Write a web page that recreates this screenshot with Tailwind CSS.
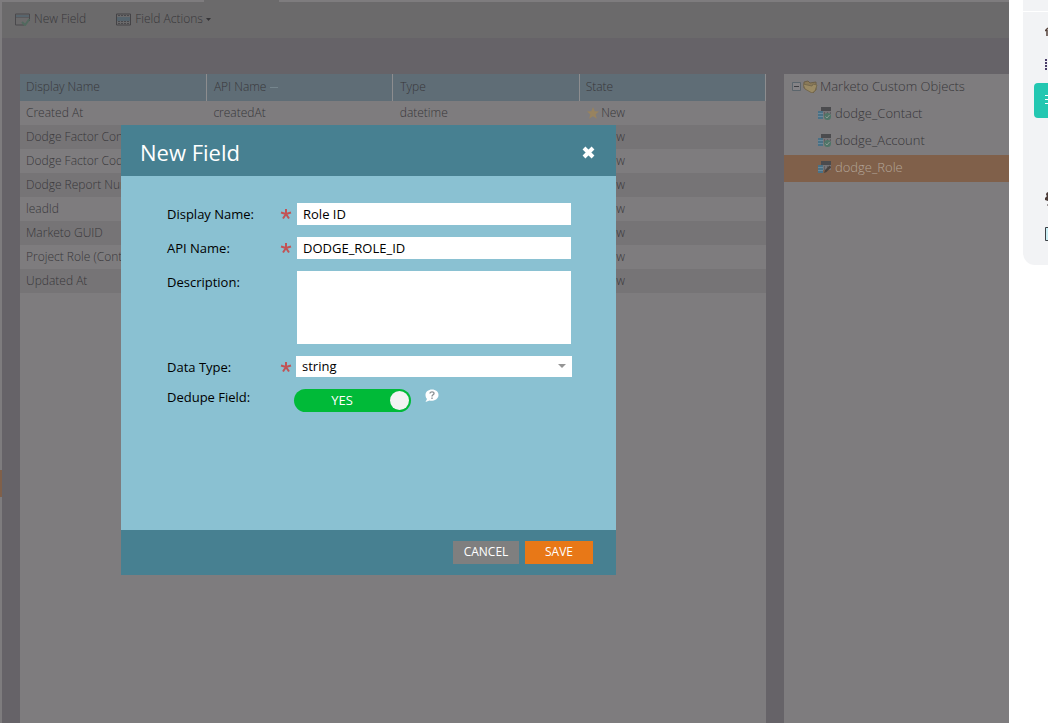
<!DOCTYPE html>
<html lang="en">
<head>
<meta charset="utf-8">
<title>Marketo Custom Objects</title>
<script src="https://cdn.jsdelivr.net/npm/@tailwindcss/browser@4"></script>
</head>
<body class="flex h-screen overflow-hidden bg-white font-['Open_Sans',sans-serif] text-[13px] text-[#38373a]">
<svg class="hidden">
  <symbol id="object" viewBox="0 0 13 13"><path d="M3 0h10v9H3z" fill="#777578"/><path d="M3 0h10v4H3z" fill="#4b4b4e"/><path d="M6 6h1M9 6h1M6 8h1M9 8h1M12 6h1" stroke="#4b4b4e"/><path d="M0 4h5v8H0z" fill="#4a7186"/><path d="M0 6.500h5M0 9.500h5" stroke="#6a899a"/></symbol>
  <symbol id="star" viewBox="0 0 12 12"><path d="M6 0l1.700 4.200 4.300.3-3.300 2.800 1.100 4.500L6 9.300l-3.800 2.500 1.100-4.500L0 4.500l4.300-.3z" fill="#98835f"/></symbol>
</svg>

<main class="relative flex min-w-0 flex-1 bg-[#7e7c7e]">
  <div class="flex w-[2px] shrink-0 flex-col"><div class="mt-[470px] h-[27px] bg-[#80604a]"></div></div>
  <div class="flex min-w-0 flex-1 flex-col bg-[#666368]">
    <div class="flex h-[2px] shrink-0 bg-[#7e7c7e]"><div class="ml-[202px] w-[75px] bg-[#6b6a6b]"></div></div>
    <nav class="flex h-9 shrink-0 items-center gap-[30px] bg-[#6b6a6b] px-[13px] pb-[2px] text-xs font-light">
      <button class="flex items-center gap-1">
        <svg class="h-[13px] w-[15px]" viewBox="0 0 15 13" fill="none"><path d="M.5 1h14v7M.5 1v11H9" stroke="#4a494c"/><path d="M1 2h13v2H1z" fill="#58656d"/><path d="M1 4.500h13" stroke="#444346" stroke-opacity=".4"/><path d="M7 9l3 3 4.500-6" stroke="#51695e" stroke-width="2"/></svg>
        New Field
      </button>
      <button class="flex items-center gap-1">
        <svg class="h-[13px] w-[15px]" viewBox="0 0 15 13" fill="none"><path d="M.5 1h14v11H.5z" stroke="#444346"/><path d="M1 4h13v4H1z" fill="#55636c"/><path d="M2 2.500h12M2 8.500h12M2 10.500h12" stroke="#4a494c" stroke-dasharray="2 1"/></svg>
        <span>Field Actions</span>
        <svg class="-ml-px h-[3px] w-[5px]" viewBox="0 0 5 3"><path d="M0 0h5L2.500 3z" fill="#353437"/></svg>
      </button>
    </nav>
    <div class="flex min-h-0 flex-1 gap-[18px] pl-[18px] pt-9">
      <section class="min-w-0 flex-1 bg-[#7e7c7e]">
        <table class="w-full table-fixed border-collapse text-left text-xs font-light">
          <thead class="bg-[#5f6d76]">
            <tr class="h-[27px]">
              <th class="border-r border-[#8d8d8f] pb-[2px] pl-[6px] font-light">Display Name</th>
              <th class="border-r border-[#8d8d8f] pb-[2px] pl-[7px] font-light">API Name <span class="inline-block h-px w-2 bg-[#75858d] align-middle"></span></th>
              <th class="border-r border-[#8d8d8f] pb-[2px] pl-[7px] font-light">Type</th>
              <th class="border-r border-[#8d8d8f] pb-[2px] pl-[6px] font-light">State</th>
            </tr>
          </thead>
          <tbody class="[&_td]:truncate [&_td]:pl-[7px] [&_td:first-child]:pl-[6px] [&_td:last-child]:pl-[6px]">
            <tr class="h-6"><td>Created At</td><td>createdAt</td><td>datetime</td><td><span class="flex items-center gap-[2px]"><svg class="ml-[2px] h-3 w-3"><use href="#star"/></svg>New</span></td></tr>
            <tr class="h-6 bg-[#767476]"><td>Dodge Factor Contact</td><td></td><td></td><td><span class="flex items-center gap-[2px]"><svg class="ml-[2px] h-3 w-3"><use href="#star"/></svg>New</span></td></tr>
            <tr class="h-6"><td>Dodge Factor Code</td><td></td><td></td><td><span class="flex items-center gap-[2px]"><svg class="ml-[2px] h-3 w-3"><use href="#star"/></svg>New</span></td></tr>
            <tr class="h-6 bg-[#767476]"><td>Dodge Report Number</td><td></td><td></td><td><span class="flex items-center gap-[2px]"><svg class="ml-[2px] h-3 w-3"><use href="#star"/></svg>New</span></td></tr>
            <tr class="h-6"><td>leadId</td><td></td><td></td><td><span class="flex items-center gap-[2px]"><svg class="ml-[2px] h-3 w-3"><use href="#star"/></svg>New</span></td></tr>
            <tr class="h-6 bg-[#767476]"><td>Marketo GUID</td><td></td><td></td><td><span class="flex items-center gap-[2px]"><svg class="ml-[2px] h-3 w-3"><use href="#star"/></svg>New</span></td></tr>
            <tr class="h-6"><td>Project Role (Contact)</td><td></td><td></td><td><span class="flex items-center gap-[2px]"><svg class="ml-[2px] h-3 w-3"><use href="#star"/></svg>New</span></td></tr>
            <tr class="h-6 bg-[#767476]"><td>Updated At</td><td></td><td></td><td><span class="flex items-center gap-[2px]"><svg class="ml-[2px] h-3 w-3"><use href="#star"/></svg>New</span></td></tr>
          </tbody>
        </table>
      </section>
      <aside class="w-[225px] shrink-0 bg-[#7e7c7e] font-light">
        <div class="flex h-[27px] items-center pb-[2px] pl-2">
          <svg class="h-[9px] w-[9px]" viewBox="0 0 9 9" fill="none"><path d="M.5.5h8v8h-8z" fill="#858386" stroke="#5b656c"/><path d="M2 4.500h5" stroke="#3e3e42"/></svg>
          <svg class="ml-[2px] h-[13px] w-[15px]" viewBox="0 0 15 13"><path d="M1 2l4-1 2 2 6-1v8l-3 3-9-5z" fill="#8a7a58" stroke="#6b5f49"/><path d="M0 4l9 2 1-2 4 1-2 6-3 2-7-4z" fill="#9a8a64" stroke="#75694f"/></svg>
          <span class="ml-[2px]">Marketo Custom Objects</span>
        </div>
        <div class="flex h-[27px] items-center gap-1 pb-[2px] pl-[34px]">
          <svg class="h-[13px] w-[13px]" viewBox="0 0 13 13"><use href="#object" width="13" height="13"/><circle cx="9.500" cy="9.500" r="3.500" fill="#4f7568"/><path d="M7.500 9.500L9 11l2.500-3" fill="none" stroke="#8e9a95"/></svg>dodge_Contact
        </div>
        <div class="flex h-[27px] items-center gap-1 pb-[2px] pl-[34px]">
          <svg class="h-[13px] w-[13px]" viewBox="0 0 13 13"><use href="#object" width="13" height="13"/><circle cx="9.500" cy="9.500" r="3.500" fill="#4f7568"/><path d="M7.500 9.500L9 11l2.500-3" fill="none" stroke="#8e9a95"/></svg>dodge_Account
        </div>
        <div class="flex h-[27px] items-center gap-1 bg-[#80604a] pb-[2px] pl-[34px] text-[#b3a598]">
          <svg class="h-[13px] w-[13px]" viewBox="0 0 13 13"><use href="#object" width="13" height="13"/><path d="M6 12l1-3 4.500-4.500 1.500 2L8.500 11z" fill="#48423f"/></svg>dodge_Role
        </div>
      </aside>
    </div>
  </div>

  <form role="dialog" aria-labelledby="title" class="absolute left-[121px] top-[125px] flex h-[450px] w-[495px] flex-col bg-[#8ac1d2] text-black">
    <header class="flex h-[51px] items-center justify-between bg-[#478091] pl-[19px] pr-[21px] text-white">
      <h1 id="title" class="pt-[3px] text-[22px] leading-7">New Field</h1>
      <button type="button" aria-label="Close" class="pt-1"><svg class="h-[13px] w-[13px]" viewBox="0 0 13 13"><path d="M2 2l9 9M11 2l-9 9" stroke="#fff" stroke-width="4"/></svg></button>
    </header>
    <div class="flex-1 pl-[46px] pr-11 pt-[27px]">
      <div class="mb-3 flex h-[22px] items-center">
        <label for="display" class="w-[113px] pt-[2px]">Display Name:</label>
        <svg class="mr-[5px] h-3 w-3" viewBox="0 0 12 12"><path d="M6 6V1M6 6l5-1.500M6 6l3 4.500M6 6l-3 4.500M6 6L1 4.500" stroke="#c25355" stroke-width="2"/></svg>
        <input id="display" value="Role ID" class="h-[22px] w-[274px] bg-white px-[6px]">
      </div>
      <div class="mb-3 flex h-[22px] items-center">
        <label for="api" class="w-[113px] pt-[2px]">API Name:</label>
        <svg class="mr-[5px] h-3 w-3" viewBox="0 0 12 12"><path d="M6 6V1M6 6l5-1.500M6 6l3 4.500M6 6l-3 4.500M6 6L1 4.500" stroke="#c25355" stroke-width="2"/></svg>
        <input id="api" value="DODGE_ROLE_ID" class="h-[22px] w-[274px] bg-white px-[6px]">
      </div>
      <div class="mb-3 flex items-start">
        <label for="desc" class="w-[130px] leading-[22px]">Description:</label>
        <textarea id="desc" class="block h-[73px] w-[274px] resize-none bg-white px-[6px]"></textarea>
      </div>
      <div class="mb-3 flex h-[21px] items-center">
        <label for="type" class="w-[113px] pt-[2px]">Data Type:</label>
        <svg class="mr-1 h-3 w-3" viewBox="0 0 12 12"><path d="M6 6V1M6 6l5-1.500M6 6l3 4.500M6 6l-3 4.500M6 6L1 4.500" stroke="#c25355" stroke-width="2"/></svg>
        <div class="relative w-[276px]">
          <select id="type" class="block h-[21px] w-full appearance-none bg-white px-[6px]"><option>string</option></select>
          <svg class="pointer-events-none absolute right-[6px] top-2 h-1 w-2" viewBox="0 0 8 4"><path d="M0 0h8L4 4z" fill="#959595"/></svg>
        </div>
      </div>
      <div class="flex items-start">
        <label for="dedupe" class="w-[127px] leading-[17px]">Dedupe Field:</label>
        <button id="dedupe" type="button" role="switch" aria-checked="true" class="flex h-[23px] w-[117px] items-center rounded-full bg-[#00ba38] pr-[2px] text-white"><span class="flex-1 text-center">YES</span><span class="h-[19px] w-[19px] rounded-full bg-[#f3f3f3]"></span></button>
        <svg class="ml-[14px] h-[14px] w-[14px]" viewBox="0 0 14 14" fill="none"><path d="M7 .5C3.300.500.500 2.800.500 6c0 2 .8 3.200 1.500 4L.5 13l4-1.500c3 .8 9-.5 9-5.500C13.500 2.800 10.700.500 7 .500z" fill="#fff"/><path d="M5 4.500c0-2.200 4.200-2 4 0 0 1.300-2 1.300-2 3M7 8.500V10" stroke="#8a8f92" stroke-width="1.300"/></svg>
      </div>
    </div>
    <footer class="flex h-[45px] items-center justify-end gap-[6px] bg-[#478091] pr-[23px] text-white">
      <button type="button" class="h-[23px] w-[66px] bg-[#7f7f7f] pb-[2px] text-xs">CANCEL</button>
      <button type="submit" class="h-[23px] w-[68px] bg-[#e87817] pb-[2px] text-xs">SAVE</button>
    </footer>
  </form>
</main>

<aside class="w-[39px] shrink-0 pl-[14px]">
  <div class="h-[265px] overflow-hidden rounded-bl-xl bg-[#f2f3f5]">
    <div class="h-3 border-b border-white"></div>
    <svg class="ml-[22px] mt-[15px] block h-[10px] w-[3px]" viewBox="0 0 3 10" fill="none"><path d="M0 4l3-3M2 3v6" stroke="#554139" stroke-width="1.500"/></svg>
    <svg class="ml-[22px] mt-[22px] block h-3 w-[3px]" viewBox="0 0 3 12"><path d="M0 1h2M0 4h2M0 7h2M0 10h2" stroke="#493c68" stroke-width="2"/></svg>
    <div class="ml-[11px] mt-3 h-[35px] rounded-l bg-[#23c7b1] pl-[11px] pt-3"><svg class="block h-[10px] w-[3px]" viewBox="0 0 3 10"><path d="M0 .5h3M0 4.500h3M0 8.500h3" stroke="#fff"/></svg></div>
    <svg class="ml-[22px] mt-[74px] block h-[14px] w-[3px]" viewBox="0 0 3 14"><path d="M3 0a3 3 0 0 0-2 3l1 1-2 2v2l3 1v3l-1 1 1 1z" fill="#4a3a36"/></svg>
    <svg class="ml-[22px] mt-[21px] block h-[14px] w-[3px]" viewBox="0 0 3 14" fill="none"><path d="M3 .5H.5v13H3" fill="#cceff5" stroke="#3c4146"/></svg>
  </div>
</aside>
</body>
</html>
